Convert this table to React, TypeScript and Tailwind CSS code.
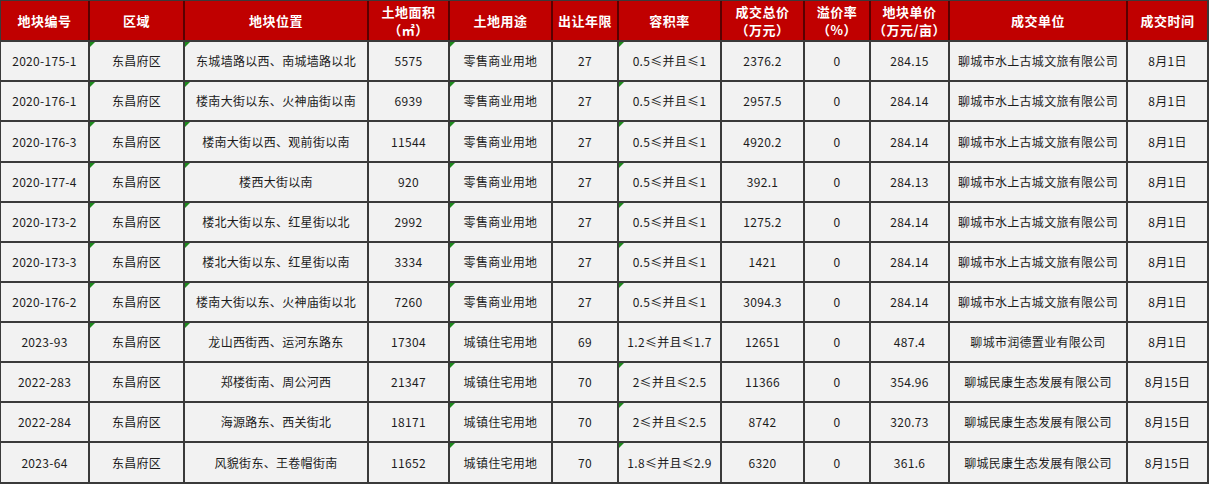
const cols = ['w-[87px]', 'w-[93px]', 'w-[182px]', 'w-[79px]', 'w-[101px]', 'w-[64px]', 'w-[101px]', 'w-[81px]', 'w-[64px]', 'w-[77px]', 'w-[176px]', 'w-[79px]'];

const headers: string[][] = [
  ['地块编号'],
  ['区域'],
  ['地块位置'],
  ['土地面积', '（㎡）'],
  ['土地用途'],
  ['出让年限'],
  ['容积率'],
  ['成交总价', '（万元）'],
  ['溢价率', '（%）'],
  ['地块单价', '（万元/亩）'],
  ['成交单位'],
  ['成交时间'],
];

const shuishang = '聊城市水上古城文旅有限公司';
const minkang = '聊城民康生态发展有限公司';

const rows: string[][] = [
  ['2020-175-1', '东昌府区', '东城墙路以西、南城墙路以北', '5575', '零售商业用地', '27', '0.5≤并且≤1', '2376.2', '0', '284.15', shuishang, '8月1日'],
  ['2020-176-1', '东昌府区', '楼南大街以东、火神庙街以南', '6939', '零售商业用地', '27', '0.5≤并且≤1', '2957.5', '0', '284.14', shuishang, '8月1日'],
  ['2020-176-3', '东昌府区', '楼南大街以西、观前街以南', '11544', '零售商业用地', '27', '0.5≤并且≤1', '4920.2', '0', '284.14', shuishang, '8月1日'],
  ['2020-177-4', '东昌府区', '楼西大街以南', '920', '零售商业用地', '27', '0.5≤并且≤1', '392.1', '0', '284.13', shuishang, '8月1日'],
  ['2020-173-2', '东昌府区', '楼北大街以东、红星街以北', '2992', '零售商业用地', '27', '0.5≤并且≤1', '1275.2', '0', '284.14', shuishang, '8月1日'],
  ['2020-173-3', '东昌府区', '楼北大街以东、红星街以南', '3334', '零售商业用地', '27', '0.5≤并且≤1', '1421', '0', '284.14', shuishang, '8月1日'],
  ['2020-176-2', '东昌府区', '楼南大街以东、火神庙街以北', '7260', '零售商业用地', '27', '0.5≤并且≤1', '3094.3', '0', '284.14', shuishang, '8月1日'],
  ['2023-93', '东昌府区', '龙山西街西、运河东路东', '17304', '城镇住宅用地', '69', '1.2≤并且≤1.7', '12651', '0', '487.4', '聊城市润德置业有限公司', '8月1日'],
  ['2022-283', '东昌府区', '郑楼街南、周公河西', '21347', '城镇住宅用地', '70', '2≤并且≤2.5', '11366', '0', '354.96', minkang, '8月15日'],
  ['2022-284', '东昌府区', '海源路东、西关街北', '18171', '城镇住宅用地', '70', '2≤并且≤2.5', '8742', '0', '320.73', minkang, '8月15日'],
  ['2023-64', '东昌府区', '风貌街东、王卷帽街南', '11652', '城镇住宅用地', '70', '1.8≤并且≤2.9', '6320', '0', '361.6', minkang, '8月15日'],
];

// rows 3 and 11 are a pixel taller in the original sheet
const rowHeights = ['h-[38px]', 'h-[38px]', 'h-[39px]', 'h-[38px]', 'h-[38px]', 'h-[38px]', 'h-[38px]', 'h-[38px]', 'h-[38px]', 'h-[38px]', 'h-[39px]'];

function hasMarker(r: number, c: number) {
  if (c === 1 || c === 2) return r <= 7;
  if (c === 4) return true;
  if (c === 6) return r !== 7;
  return false;
}

function Marker() {
  return <span className="absolute left-0 top-0 w-0 h-0 border-t-[5px] border-r-[5px] border-t-[#1e8a1e] border-r-transparent" />;
}

export default function App() {
  return (
    <div className="w-[1209px] h-[484px] bg-white" style={{ fontFamily: '"Noto Sans CJK SC", "Noto Sans", sans-serif' }}>
      <div className="inline-flex flex-col gap-[2px] bg-[#3a3a3a] pl-[1px] pt-[1px] pr-[2px] pb-[2px]">
        <div className="flex gap-[2px] bg-[#5a0000]">
          {headers.map((h, i) => (
            <div
              key={i}
              className={`${cols[i]} h-[39px] bg-[#c00000] text-white font-bold text-[13px] leading-[18px] flex flex-col items-center justify-center tracking-[0.5px]`}
            >
              {h.map((line, j) => (
                <span key={j} className="block leading-[18px]">{line}</span>
              ))}
            </div>
          ))}
        </div>
        {rows.map((row, r) => (
          <div key={r} className="flex gap-[2px]">
            {row.map((cell, c) => (
              <div
                key={c}
                className={`${cols[c]} ${rowHeights[r]} relative bg-[#f2f2f2] text-[#1c1c1c] text-[12px] tracking-[0.3px] flex items-center justify-center whitespace-nowrap`}
              >
                {hasMarker(r, c) && <Marker />}
                {cell}
              </div>
            ))}
          </div>
        ))}
      </div>
    </div>
  );
}
